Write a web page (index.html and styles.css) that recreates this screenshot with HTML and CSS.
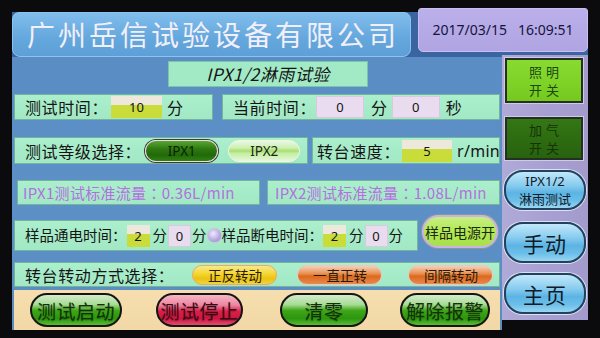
FILE: index.html
```html
<!DOCTYPE html>
<html lang="zh-CN">
<head>
<meta charset="utf-8">
<title>IPX1/2淋雨试验</title>
<link rel="stylesheet" href="styles.css">
</head>
<body>
<div class="screen">
  <header class="top">
    <div class="brand">广州岳信试验设备有限公司</div>
    <div class="clock">2017/03/15&nbsp;&nbsp;&nbsp;16:09:51</div>
  </header>
  <div class="body">
    <main class="main">
      <div class="caption-row"><div class="caption">IPX1/2淋雨试验</div></div>

      <div class="row r1">
        <div class="panel p1a">
          <span class="lbl">测试时间<span class="c">：</span></span>
          <span class="field yellow f-test">10</span>
          <span class="unit u-test">分</span>
        </div>
        <div class="panel p1b">
          <span class="lbl">当前时间<span class="c">：</span></span>
          <span class="field lav f-cur1">0</span>
          <span class="unit u-cur1">分</span>
          <span class="field lav f-cur2">0</span>
          <span class="unit u-cur2">秒</span>
        </div>
      </div>

      <div class="row r2">
        <div class="panel p2a">
          <span class="lbl">测试等级选择<span class="c">：</span></span>
          <span class="pill ipx1">IPX1</span>
          <span class="pill ipx2">IPX2</span>
        </div>
        <div class="panel p2b">
          <span class="lbl">转台速度<span class="c">：</span></span>
          <span class="field yellow f-speed">5</span>
          <span class="unit u-speed">r/min</span>
        </div>
      </div>

      <div class="row r3">
        <div class="panel p3a flow">IPX1测试标准流量<span class="c">：</span>0.36L/min</div>
        <div class="panel p3b flow">IPX2测试标准流量<span class="c">：</span>1.08L/min</div>
      </div>

      <div class="row r4">
        <div class="panel p4a">
          <span class="lbl">样品通电时间<span class="c">：</span></span>
          <span class="field yellow small f-on1">2</span>
          <span class="unit u-s">分</span>
          <span class="field lav small f-on2">0</span>
          <span class="unit u-s2">分</span>
          <span class="dot"></span>
          <span class="lbl">样品断电时间<span class="c">：</span></span>
          <span class="field yellow small f-off1">2</span>
          <span class="unit u-s">分</span>
          <span class="field lav small f-off2">0</span>
          <span class="unit u-s2">分</span>
        </div>
        <div class="power">样品电源开</div>
      </div>

      <div class="row r5">
        <div class="panel p5">
          <span class="lbl">转台转动方式选择<span class="c">：</span></span>
          <span class="pill mode yellow-pill m1">正反转动</span>
          <span class="pill mode orange-pill m2">一直正转</span>
          <span class="pill mode orange-pill m3">间隔转动</span>
        </div>
      </div>

      <div class="row r6">
        <span class="btn green b-start">测试启动</span>
        <span class="btn red b-stop">测试停止</span>
        <span class="btn green b-clear">清零</span>
        <span class="btn green b-alarm">解除报警</span>
      </div>
    </main>

    <aside class="side">
      <div class="switch sw-light"><span>照明</span><span>开关</span></div>
      <div class="switch sw-air"><span>加气</span><span>开关</span></div>
      <div class="nav nav-ipx"><span>IPX1/2</span><span>淋雨测试</span></div>
      <div class="nav nav-big">手动</div>
      <div class="nav nav-big">主页</div>
    </aside>
  </div>
</div>
</body>
</html>
```

FILE: styles.css
```css
* { box-sizing: border-box; }

html, body {
  margin: 0;
  padding: 0;
}

body {
  width: 600px;
  height: 338px;
  overflow: hidden;
  background: #0b0b0e;
  font-family: "Noto Sans CJK SC", "Noto Sans", sans-serif;
  color: #141414;
}

.screen {
  margin: 8px 0 0 12px;
  width: 576px;
  height: 322px;
  display: flex;
  flex-direction: column;
}

/* full-width colon centred in its cell */
.c { font-family: "Noto Sans CJK TC", "Noto Sans CJK SC", sans-serif; }

/* ---------- header ---------- */
.top {
  height: 49px;
  display: flex;
  align-items: flex-start;
  background: linear-gradient(#0b0b0e 0 4px, #3a65a0 4px);
}

.brand {
  margin-top: 4px;
  width: 399px;
  height: 45px;
  border-radius: 7px 7px 8px 8px;
  background: linear-gradient(#80bdec, #64a7dd 60%, #5d9fd6);
  border: 1px solid #8cc4ee;
  color: #f3eff9;
  font-size: 28px;
  letter-spacing: 3px;
  line-height: 43px;
  padding-left: 14px;
  white-space: nowrap;
}

.clock {
  margin-left: 7px;
  width: 170px;
  height: 44px;
  border-radius: 3px 3px 5px 5px;
  background: linear-gradient(#bbb0ea, #b0a4e2);
  border: 1px solid #c8c0f0;
  color: #141440;
  font-family: "Noto Sans", sans-serif;
  font-size: 14px;
  line-height: 42px;
  text-align: center;
  white-space: nowrap;
}

/* ---------- body ---------- */
.body {
  flex: 1;
  display: flex;
  align-items: flex-start;
}

.main {
  width: 490px;
  height: 273px;
  background: linear-gradient(#5a8dc4, #5c90c6 50%, #5a8cc2);
  padding: 0 2px;
  display: flex;
  flex-direction: column;
}

.row {
  display: flex;
  align-items: center;
}

.caption-row {
  margin-top: 4px;
  height: 26px;
  padding-left: 154px;
  display: flex;
}

.caption {
  width: 200px;
  height: 26px;
  background: #a2e9c6;
  border: 1px solid #7ec4aa;
  font-style: italic;
  font-size: 17px;
  line-height: 24px;
  text-align: center;
  letter-spacing: 0.5px;
}

.panel {
  height: 100%;
  background: linear-gradient(#abefcd, #a2e8c5);
  border: 1px solid #72b49c;
  display: flex;
  align-items: center;
  font-size: 16px;
  letter-spacing: 0.6px;
  white-space: nowrap;
}

.panel > * { flex-shrink: 0; }

.lbl { line-height: 1; }

.field {
  height: 22px;
  display: flex;
  align-items: center;
  justify-content: center;
  font-family: "Noto Sans", sans-serif;
  font-size: 13px;
  letter-spacing: 0;
}

.field.yellow {
  background: linear-gradient(#eee8dc 0 42%, #c9dc3a 42% 100%);
}

.field.lav {
  background: #e9dcef;
  border: 1px solid #d8c8e2;
}

.field.small { width: 23px; }

.unit { line-height: 1; }

/* row 1 */
.r1 { margin-top: 7px; height: 26px; }
.p1a { width: 199px; padding-left: 10px; }
.p1b { width: 278px; margin-left: 9px; padding-left: 10px; }
.f-test { width: 51px; margin-left: 3px; }
.u-test { margin-left: 5px; }
.f-cur1 { width: 48px; margin-left: 0; }
.u-cur1 { margin-left: 7px; }
.f-cur2 { width: 48px; margin-left: 4px; }
.u-cur2 { margin-left: 6px; }

/* row 2 */
.r2 { margin-top: 17px; height: 27px; }
.p2a { width: 294px; padding-left: 10px; }
.p2b { width: 188px; margin-left: 4px; padding-left: 4px; }

.pill {
  display: flex;
  align-items: center;
  justify-content: center;
  font-family: "Noto Sans", "Noto Sans CJK SC", sans-serif;
  letter-spacing: 0;
}

.ipx1 {
  width: 73px;
  height: 22px;
  margin-left: 4px;
  border-radius: 11px;
  background: linear-gradient(#5aa632 0%, #2e7a10 40%, #22680a 70%, #2f8212 100%);
  border: 1px solid #f2d6e4;
  box-shadow: 0 0 0 1px #3c3c3c;
  font-size: 13.5px;
  color: #0c2404;
}

.ipx2 {
  width: 72px;
  height: 22px;
  margin-left: 10px;
  border-radius: 11px;
  background: linear-gradient(#eaf8e2 0%, #cdefb0 35%, #a6df6c 50%, #c6eea4 62%, #e4f7d8 100%);
  border: 1px solid #eef6e4;
  font-size: 13.5px;
  color: #1a2a10;
}

.f-speed { width: 50px; margin-left: 2px; }
.u-speed { margin-left: 5px; font-family: "Noto Sans", sans-serif; font-size: 16px; letter-spacing: 0.3px; }

/* row 3 */
.r3 { margin-top: 16px; height: 25px; }
.flow {
  color: #b46fe0;
  font-size: 15px;
  letter-spacing: 0.3px;
  padding-left: 5px;
}
.p3a { width: 243px; margin-left: 3px; }
.p3b { width: 233px; margin-left: 7px; padding-left: 7px; }

/* row 4 */
.r4 { margin-top: 15px; height: 31px; }
.p4a { width: 404px; padding-left: 10px; font-size: 14.5px; letter-spacing: 0; }
.f-on1 { margin-left: 0; }
.u-s { margin-left: 3px; }
.f-on2 { margin-left: 1px; }
.u-s2 { margin-left: 1px; }
.f-off1 { margin-left: 0; }
.f-off2 { margin-left: 1px; }

.dot {
  width: 15px;
  height: 15px;
  margin: 0;
  border-radius: 50%;
  background: radial-gradient(circle at 40% 35%, #f0eafc 0%, #b8acE0 55%, #8e80c8 100%);
  border: 1px solid #c8bee8;
}

.power {
  width: 76px;
  height: 33px;
  margin-left: 4px;
  margin-top: -8px;
  border-radius: 16px;
  background: linear-gradient(#c6f080, #b2e858 50%, #a8e04c);
  border: 2px solid #c8b2e8;
  box-shadow: 0 0 0 1px #8a9a8a;
  display: flex;
  align-items: center;
  justify-content: center;
  font-size: 14px;
  color: #1a2a0a;
  white-space: nowrap;
}

/* row 5 */
.r5 { margin-top: 11px; height: 25px; }
.p5 { width: 486px; padding-left: 10px; }
.mode {
  width: 85px;
  height: 20px;
  border-radius: 10px;
  font-size: 13.5px;
  color: #2a1a08;
  font-family: "Noto Sans CJK SC", sans-serif;
}
.yellow-pill {
  background: linear-gradient(#f8e98e 0%, #f4d52e 45%, #eac212 70%, #f2d440 100%);
  border: 1px solid #f0a860;
}
.orange-pill {
  background: linear-gradient(#f2d0bc 0%, #ea9556 40%, #dc6a1e 58%, #e88a50 100%);
  border: 1px solid #f2c2c8;
}
.m1 { margin-left: 18px; }
.m2 { margin-left: 20px; }
.m3 { margin-left: 26px; }

/* row 6 */
.r6 {
  margin-top: 3px;
  height: 40px;
  background: linear-gradient(#f6deae, #f2d8a6);
  padding-left: 16px;
}

.btn {
  height: 34px;
  border-radius: 17px;
  border: 2px solid #151515;
  display: flex;
  align-items: center;
  justify-content: center;
  font-size: 19px;
  letter-spacing: 0.5px;
  white-space: nowrap;
}
.btn.green {
  background: linear-gradient(#d4ecd0 0%, #a6dc92 32%, #3ea618 52%, #2c960e 78%, #58bc34 100%);
  color: #143008;
  text-shadow: 0 1px 1px rgba(0,0,0,0.25);
}
.btn.red {
  background: linear-gradient(#f4b8c6 0%, #ee84a0 34%, #da2048 54%, #cc1640 78%, #e04c6c 100%);
  color: #3a0a14;
  text-shadow: 0 1px 1px rgba(0,0,0,0.25);
}
.b-start { width: 92px; }
.b-stop { width: 87px; margin-left: 34px; }
.b-clear { width: 88px; margin-left: 37px; }
.b-alarm { width: 90px; margin-left: 32px; }

/* ---------- sidebar ---------- */
.side {
  width: 86px;
  height: 265px;
  margin-top: -2px;
  background: linear-gradient(90deg, #b0aad8, #a8a0d2 50%, #a39bcc);
  padding: 3px 0 0 3px;
  display: flex;
  flex-direction: column;
}

.switch {
  width: 78px;
  border: 2px solid #243020;
  box-shadow: 0 0 0 1px #cfcaea;
  text-align: center;
  font-size: 13px;
  line-height: 18px;
  letter-spacing: 4px;
  padding-left: 4px;
  display: flex;
  flex-direction: column;
  align-items: center;
  justify-content: center;
}
.sw-light {
  height: 45px;
  background: linear-gradient(#88da30, #7ed226 60%, #74c81e);
  color: #1c4610;
}
.sw-air {
  height: 43px;
  margin-top: 14px;
  background: linear-gradient(#347614, #2c6a10 60%, #286210);
  color: #143406;
}

.nav {
  width: 82px;
  margin-left: -1px;
  border-radius: 19px;
  border: 2px solid #23405c;
  box-shadow: 0 0 0 1px #d8e4f4;
  background: linear-gradient(#c2e8fa 0%, #86cbee 38%, #5cb4e4 58%, #6cbfe8 80%, #9ad6f2 100%);
  display: flex;
  flex-direction: column;
  align-items: center;
  justify-content: center;
  color: #101a28;
}
.nav-ipx {
  height: 40px;
  margin-top: 10px;
  font-size: 13px;
  line-height: 17px;
}
.nav-ipx span:first-child { font-family: "Noto Sans", sans-serif; }
.nav-big {
  height: 41px;
  margin-top: 12px;
  font-size: 21px;
  letter-spacing: 1px;
}
.nav-big + .nav-big { margin-top: 10px; }
```
